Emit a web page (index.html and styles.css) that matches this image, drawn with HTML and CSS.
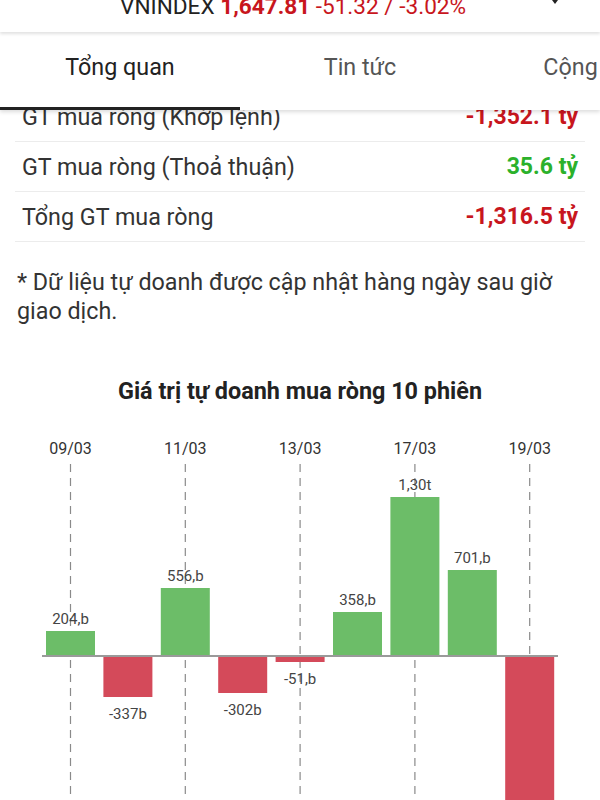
FILE: index.html
```html
<!DOCTYPE html>
<html lang="vi">

<head>
  <meta charset="UTF-8">
  <meta name="viewport" content="width=device-width, initial-scale=1.0">
  <title>VNINDEX - Tự doanh</title>
  <link rel="stylesheet" href="styles.css">
</head>

<body>
  <header class="topbar">
    <div class="ticker">
      <span class="ticker-name">VNINDEX</span>
      <b class="down">1,647.81</b>
      <span class="down">-51.32 / -3.02%</span>
    </div>
    <svg class="ticker-icon" width="20" height="10" viewBox="0 0 20 10">
      <polyline points="6,-6 12,2 18,-6" fill="none" stroke="#222" stroke-width="2.4" />
    </svg>
  </header>

  <nav class="tabs">
    <div class="tab-row">
      <a class="tab active">Tổng quan</a>
      <a class="tab">Tin tức</a>
      <a class="tab">Cộng đồng</a>
    </div>
    <div class="tab-indicator"></div>
  </nav>

  <main>
    <ul class="stats">
      <li><span>GT mua ròng (Khớp lệnh)</span><b class="down">-1,352.1 tỷ</b></li>
      <li><span>GT mua ròng (Thoả thuận)</span><b class="up">35.6 tỷ</b></li>
      <li><span>Tổng GT mua ròng</span><b class="down">-1,316.5 tỷ</b></li>
    </ul>

    <p class="note">* Dữ liệu tự doanh được cập nhật hàng ngày sau giờ giao dịch.</p>

    <section class="chart">
      <h2>Giá trị tự doanh mua ròng 10 phiên</h2>
      <svg class="chart-svg" width="600" height="380" viewBox="0 0 600 380">
        <g class="dates">
          <text x="70.5" y="29">09/03</text>
          <text x="185.3" y="29">11/03</text>
          <text x="300.1" y="29">13/03</text>
          <text x="414.9" y="29">17/03</text>
          <text x="529.7" y="29">19/03</text>
        </g>
        <g class="grid">
          <line x1="70.5" y1="39" x2="70.5" y2="380" />
          <line x1="185.3" y1="39" x2="185.3" y2="380" />
          <line x1="300.1" y1="39" x2="300.1" y2="380" />
          <line x1="414.9" y1="39" x2="414.9" y2="380" />
          <line x1="529.7" y1="39" x2="529.7" y2="380" />
        </g>
        <g class="bars">
          <rect class="pos" x="46" y="206" width="49" height="25" />
          <rect class="neg" x="103.4" y="231" width="49" height="41" />
          <rect class="pos" x="160.8" y="163" width="49" height="68" />
          <rect class="neg" x="218.2" y="231" width="49" height="37" />
          <rect class="neg" x="275.6" y="231" width="49" height="6" />
          <rect class="pos" x="333" y="187" width="49" height="44" />
          <rect class="pos" x="390.4" y="72" width="49" height="159" />
          <rect class="pos" x="447.8" y="145" width="49" height="86" />
          <rect class="neg" x="505.2" y="231" width="49" height="190" />
        </g>
        <line class="axis" x1="42" y1="231" x2="558" y2="231" />
        <g class="labels">
          <text x="70.5" y="198.5">204,b</text>
          <text x="127.9" y="293.5">-337b</text>
          <text x="185.3" y="155.5">556,b</text>
          <text x="242.7" y="289.5">-302b</text>
          <text x="300.1" y="258.5">-51,b</text>
          <text x="357.5" y="179.5">358,b</text>
          <text x="414.9" y="64.5">1,30t</text>
          <text x="472.3" y="137.5">701,b</text>
        </g>
      </svg>
    </section>
  </main>
</body>

</html>
```

FILE: styles.css
```css
* {
  box-sizing: border-box;
}

body {
  margin: 0;
  background: #fff;
  color: #333;
  font-family: Roboto, "Noto Sans", sans-serif;
  overflow: hidden;
}

.down {
  color: #c8161d;
}

.up {
  color: #2bb12b;
}

.topbar {
  position: relative;
  z-index: 3;
  height: 32px;
  display: flex;
  justify-content: space-between;
  padding: 0 37px 0 120px;
  background: #fff;
  box-shadow: 0 2px 3px rgba(0, 0, 0, 0.12);
  overflow: hidden;
}

.ticker {
  margin-top: -5px;
  font-size: 22.6px;
  line-height: 24px;
  white-space: nowrap;
}

.ticker-name {
  color: #222;
}

.tabs {
  position: relative;
  z-index: 2;
  background: #fff;
  box-shadow: 0 2px 4px rgba(0, 0, 0, 0.14);
}

.tab-row {
  display: flex;
  height: 75px;
  align-items: center;
  padding-bottom: 6px;
  overflow: hidden;
}

.tab {
  flex: 0 0 240px;
  text-align: center;
  font-size: 23.3px;
  color: #555;
  white-space: nowrap;
}

.tab.active {
  color: #222;
}

.tab-indicator {
  width: 240px;
  height: 3px;
  background: #222;
}

.stats {
  list-style: none;
  margin: -18px 15px 0;
  padding: 0;
}

.stats li {
  display: flex;
  justify-content: space-between;
  align-items: center;
  height: 50px;
  padding: 0 7px;
  border-bottom: 1px solid #ececec;
  font-size: 23.3px;
}

.stats b {
  font-weight: 700;
  font-size: 23px;
}

.note {
  margin: 26px 0 0;
  padding: 0 17px;
  font-size: 23.3px;
  line-height: 29px;
  color: #333;
}

.chart h2 {
  margin: 50px 0 0;
  text-align: center;
  font-size: 23.4px;
  line-height: 30px;
  font-weight: 700;
  color: #222;
}

.chart-svg {
  display: block;
  margin-top: 19px;
}

.dates text {
  font-size: 16px;
  fill: #333;
  text-anchor: middle;
}

.grid line {
  stroke: #8a8a8a;
  stroke-width: 1.2;
  stroke-dasharray: 8 6;
}

.bars .pos {
  fill: #6cbd68;
}

.bars .neg {
  fill: #d44a5a;
}

.axis {
  stroke: #9a9a9a;
  stroke-width: 2;
}

.labels text {
  font-size: 15px;
  fill: #444;
  text-anchor: middle;
}
```
